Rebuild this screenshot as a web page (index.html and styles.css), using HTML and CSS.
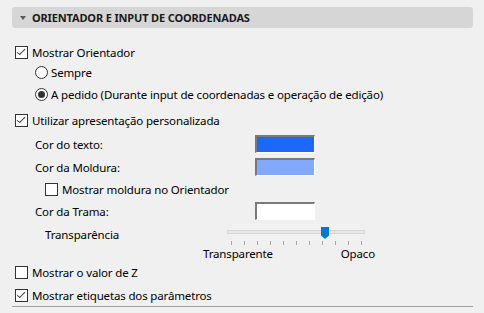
FILE: index.html
```html
<!DOCTYPE html>
<html lang="pt">
<head>
  <meta charset="UTF-8">
  <title>Orientador e input de coordenadas</title>
  <link rel="stylesheet" href="styles.css">
</head>
<body>

<div class="panel">
  <div class="panel-head">
    <span class="caret"></span>
    <span class="head-title">ORIENTADOR E INPUT DE COORDENADAS</span>
  </div>

  <div class="panel-body">
    <div class="row r1"><span class="check on"></span>Mostrar Orientador</div>
    <div class="row lvl-1"><span class="radio"></span>Sempre</div>
    <div class="row lvl-1 r3"><span class="radio on"></span>A pedido (Durante input de coordenadas e operação de edição)</div>

    <div class="row r4"><span class="check on"></span>Utilizar apresentação personalizada</div>
    <div class="row lvl-1 r5"><span class="field-label">Cor do texto:</span><span class="swatch blue"></span></div>
    <div class="row lvl-1 r6"><span class="field-label">Cor da Moldura:</span><span class="swatch light"></span></div>
    <div class="row lvl-2 r7"><span class="check"></span>Mostrar moldura no Orientador</div>
    <div class="row lvl-1 r7"><span class="field-label">Cor da Trama:</span><span class="swatch white"></span></div>

    <!-- transparency slider -->
    <div class="row lvl-2 slider-row">
      <span class="slider-label">Transparência</span>
      <div class="slider">
        <div class="track"></div>
        <svg class="thumb" width="8" height="12" viewBox="0 0 8 12"><path d="M0 0H8V8.5L4 12L0 8.5Z" fill="#0078d7"/></svg>
        <div class="ticks">
          <i></i><i></i><i></i><i></i><i></i><i></i><i></i><i></i><i></i><i></i><i></i>
        </div>
      </div>
    </div>
    <div class="slider-ends">
      <span>Transparente</span>
      <span>Opaco</span>
    </div>

    <div class="row"><span class="check"></span>Mostrar o valor de Z</div>
    <div class="row r-last"><span class="check on"></span>Mostrar etiquetas dos parâmetros</div>
  </div>
</div>

</body>
</html>
```

FILE: styles.css
```css
body {
  margin: 0;
  background-color: #f0f0f0;
  font-family: "Noto Sans", "Open Sans", sans-serif;
  font-size: 11.5px;
  letter-spacing: -0.15px;
  color: #000;
}

.panel {
  margin: 7px 0 0 12px;
  width: 461px;
}

.panel-head {
  height: 21px;
  background-color: #d6d6d6;
  border-radius: 3px;
  display: flex;
  align-items: center;
}

.caret {
  width: 0;
  height: 0;
  margin: 1px 0 0 8px;
  border-left: 3px solid transparent;
  border-right: 3px solid transparent;
  border-top: 4px solid #5a5a5a;
}

.head-title {
  margin-left: 6px;
  font-weight: bold;
  font-size: 11px;
  letter-spacing: -0.15px;
  color: #1a1a1a;
}

.panel-body {
  padding-left: 3px;
  border-bottom: 1px solid #a0a0a0;
  padding-bottom: 1px;
}

.row {
  height: 20px;
  display: flex;
  align-items: center;
  white-space: nowrap;
}

.r1 { margin-top: 14px; }
.r3 { margin-top: 2px; }
.r4 { margin-top: 6px; }
.r5 { margin-top: 4px; }
.r6 { margin-top: 3px; }
.r7 { margin-top: 2px; }
.r-last { margin-top: 3px; }

.lvl-1 { padding-left: 20px; }
.lvl-2 { padding-left: 30px; }

/* checkbox */
.check {
  position: relative;
  width: 11px;
  height: 11px;
  border: 1px solid #333;
  background-color: #fff;
  margin-right: 4px;
  flex-shrink: 0;
}

.check.on::after {
  content: "";
  position: absolute;
  left: 3px;
  top: 0px;
  width: 3px;
  height: 7px;
  border-right: 1px solid #444;
  border-bottom: 1px solid #444;
  transform: rotate(45deg) skewY(-8deg);
}

/* radio */
.radio {
  width: 11px;
  height: 11px;
  border: 1px solid #333;
  border-radius: 50%;
  background-color: #fff;
  margin-right: 3px;
  display: flex;
  align-items: center;
  justify-content: center;
  flex-shrink: 0;
}

.radio.on::after {
  content: "";
  width: 7px;
  height: 7px;
  border-radius: 50%;
  background-color: #333;
}

/* colour fields */
.field-label {
  width: 220px;
}

.swatch {
  width: 57px;
  height: 15px;
  border-top: 2px solid #7a7a7a;
  border-left: 2px solid #7a7a7a;
  border-right: 1px solid #fff;
  border-bottom: 1px solid #fff;
}

.swatch.blue { background-color: #1f66ff; }
.swatch.light { background-color: #82a9ff; }
.swatch.white { background-color: #fff; }

/* slider */
.slider-row {
  margin-top: 4px;
  align-items: flex-start;
  height: 20px;
}

.slider-label {
  width: 182px;
  line-height: 20px;
}

.slider {
  position: relative;
  width: 138px;
  height: 20px;
}

.track {
  margin-top: 5px;
  height: 2px;
  background-color: #e7e7e7;
  border: 1px solid #d6d6d6;
}

.thumb {
  position: absolute;
  left: 94px;
  top: 2px;
}

.ticks {
  display: flex;
  justify-content: space-between;
  margin: 7px 3px 0 4px;
}

.ticks i {
  width: 1px;
  height: 4px;
  background-color: #a8a8a8;
}

.slider-ends {
  display: flex;
  justify-content: space-between;
  width: 172px;
  margin-left: 188px;
  height: 16px;
  line-height: 16px;
  margin-top: 1px;
}
```
